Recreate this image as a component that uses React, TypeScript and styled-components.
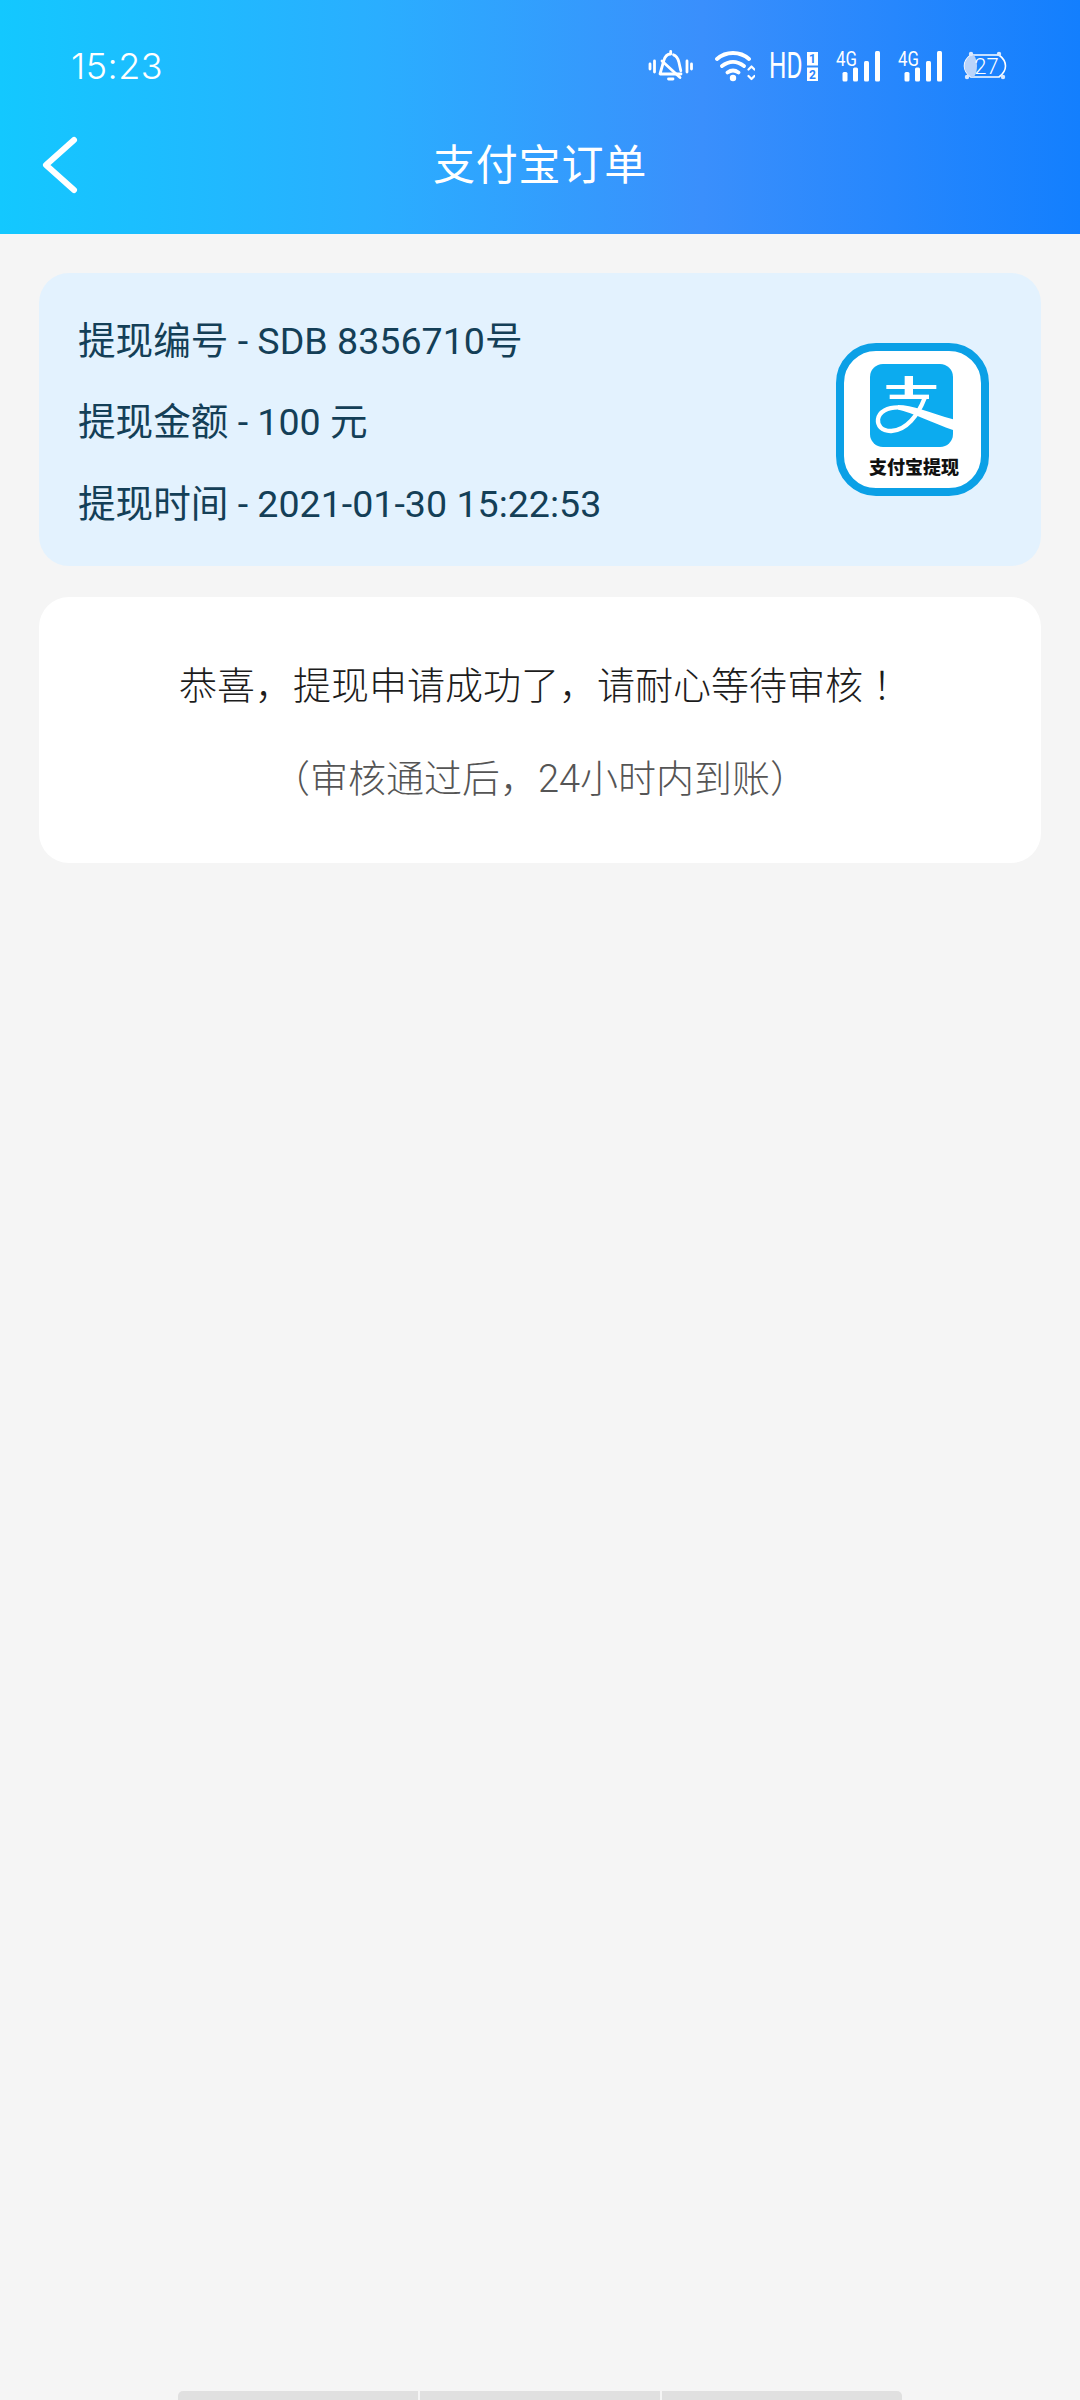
import styled, { createGlobalStyle } from 'styled-components'

const GlobalStyle = createGlobalStyle`
  html, body {
    margin: 0;
    padding: 0;
    background: #f5f5f5;
  }
  body {
    font-family: "Roboto", "Noto Sans CJK SC", sans-serif;
  }
`

const Page = styled.div`
  position: relative;
  width: 1080px;
  height: 2400px;
  background: #f5f5f5;
  overflow: hidden;
`

const Header = styled.header`
  height: 234px;
  box-sizing: border-box;
  padding-top: 42px;
  background: linear-gradient(90deg, #13c8ff 0%, #2aaeff 35%, #3a8ffc 65%, #137ffe 100%);
  color: #fff;
`

const StatusBar = styled.div`
  height: 48px;
  display: flex;
  align-items: center;
  justify-content: space-between;
  padding: 0 73px 0 71px;
`

const Clock = styled.span`
  font-family: "Inter", "Roboto", sans-serif;
  font-size: 36px;
  font-weight: 300;
  letter-spacing: 0.5px;
`

const StatusIcons = styled.div`
  display: flex;
  align-items: center;
`

const StatusIcon = styled.span<{ $gap?: number }>`
  display: flex;
  margin-left: ${(p) => p.$gap ?? 0}px;
`

const NavBar = styled.div`
  position: relative;
  height: 84px;
  margin-top: 34px;
  display: flex;
  align-items: center;
  justify-content: center;
`

const BackButton = styled.button`
  position: absolute;
  left: 40px;
  top: 10px;
  padding: 0;
  width: 40px;
  height: 62px;
  border: 0;
  background: none;
`

const Title = styled.h1`
  margin: 0;
  font-size: 42px;
  font-weight: 400;
  line-height: 84px;
  letter-spacing: 0.8px;
`

const Content = styled.main`
  padding: 39px 39px 0;
  display: flex;
  flex-direction: column;
  gap: 31px;
`

const OrderCard = styled.section`
  height: 293px;
  box-sizing: border-box;
  padding: 0 52px 0 39px;
  background: #e3f2fe;
  border-radius: 30px;
  display: flex;
  align-items: center;
  justify-content: space-between;
`

const OrderInfo = styled.div`
  display: flex;
  flex-direction: column;
  gap: 31.5px;
  padding-top: 5px;
`

const OrderRow = styled.div`
  font-size: 37.6px;
  line-height: 50px;
  font-weight: 400;
  color: #143f57;
`

const NoticeCard = styled.section`
  height: 266px;
  box-sizing: border-box;
  padding-top: 61px;
  background: #fff;
  border-radius: 30px;
  text-align: center;
`

const NoticeLine = styled.p<{ $muted?: boolean }>`
  margin: ${(p) => (p.$muted ? '43px' : '0')} 0 0;
  font-size: 38px;
  line-height: 50px;
  font-weight: 300;
  color: ${(p) => (p.$muted ? '#555' : '#1c1c1c')};
`

const CenteredMark = styled.span`
  font-family: "Noto Sans CJK TC", sans-serif;
`

const HomeBar = styled.div`
  position: absolute;
  left: 178px;
  bottom: 0;
  width: 724px;
  height: 9px;
  display: flex;
  gap: 2px;
`

const HomeSegment = styled.span`
  flex: 1;
  background: #e0e0e0;

  &:first-child {
    border-top-left-radius: 5px;
  }
  &:last-child {
    border-top-right-radius: 5px;
  }
`

const IconText = styled.text`
  font-family: "Roboto", sans-serif;
  fill: #fff;
`

function MutedBell() {
  return (
    <svg width="46" height="32" viewBox="0 0 46 32" fill="none" stroke="#fff" strokeWidth="2.800" strokeLinecap="round" strokeLinejoin="round">
      <path d="M2 14v5M6.500 11v11M39 11v11M43.500 14v5" />
      <path d="M22.700 1.500v2M22.700 4c-4 0-6 3-7 7L12 24h21" />
      <path d="M25.500 4.800c3 1 4.500 4 5.300 7l2 9" />
      <path d="M14 11l18 16.500" />
      <path d="M20.500 29h4.500" />
    </svg>
  )
}

function WifiIcon() {
  return (
    <svg width="40" height="32" viewBox="0 0 40 32" fill="none">
      <path d="M2 9C11 1 25 1 34 9M7 16c7-5.500 15-5.500 22 0M12.500 22.500c3.500-2.500 7.500-2.500 11 0" stroke="#fff" strokeWidth="3.800" strokeLinecap="round" />
      <circle cx="18" cy="28" r="3.200" fill="#fff" />
      <path d="M33.500 19.500l3-3 3 3M33.500 26l3 3 3-3" stroke="#fff" strokeWidth="2.200" strokeLinecap="round" strokeLinejoin="round" />
    </svg>
  )
}

function HdIcon() {
  return (
    <svg width="49" height="44" viewBox="0 -6 49 44">
      <IconText transform="translate(0 28) scale(0.68 1)" fontSize="36" fontWeight="400">HD</IconText>
      <rect x="38" y="2" width="11" height="13.500" fill="#fff" />
      <rect x="38" y="17.500" width="11" height="13.500" fill="#fff" />
      <text x="43.500" y="13" fontSize="12" fontWeight="700" textAnchor="middle" fontFamily="Roboto, sans-serif" fill="#2a85fd">1</text>
      <text x="43.500" y="28.500" fontSize="12" fontWeight="700" textAnchor="middle" fontFamily="Roboto, sans-serif" fill="#2a85fd">2</text>
    </svg>
  )
}

function SignalIcon() {
  return (
    <svg width="44" height="40" viewBox="0 -4 44 40">
      <IconText transform="translate(0 16) scale(0.84 1)" fontSize="20">4G</IconText>
      <rect x="6.500" y="22" width="5" height="9.500" rx="1.500" fill="#fff" />
      <rect x="17" y="17.500" width="5" height="14" rx="1.500" fill="#fff" />
      <rect x="28" y="11" width="5" height="20.500" rx="1.500" fill="#fff" />
      <rect x="39" y="1" width="5" height="30.500" rx="1.500" fill="#fff" />
    </svg>
  )
}

function BatteryIcon() {
  return (
    <svg width="44" height="32" viewBox="0 0 44 32">
      <path d="M8 5C4 8 1.500 11.500 1.500 16S4 24 8 27h28c4-3 6.500-6.500 6.500-11S40 8 36 5z" fill="none" stroke="#fff" strokeWidth="1.600" />
      <path d="M8 5h3c2 3 3 7 3 11s-1 8-3 11H8c-4-3-6.500-6.500-6.500-11S4 8 8 5z" fill="#b9d3fa" />
      <circle cx="8" cy="4" r="2.200" fill="#dbe9fe" />
      <circle cx="36" cy="4" r="2.200" fill="#dbe9fe" />
      <circle cx="4" cy="27" r="2.200" fill="#dbe9fe" />
      <circle cx="40" cy="27" r="2.200" fill="#dbe9fe" />
      <IconText x="23.500" y="24" fontSize="22" fontWeight="300" textAnchor="middle">27</IconText>
    </svg>
  )
}

function AlipayLogo() {
  return (
    <svg width="153" height="153" viewBox="0 0 153 153">
      <rect x="4" y="4" width="145" height="145" rx="36" fill="#fff" stroke="#0ba0e6" strokeWidth="8" />
      <rect x="34" y="21" width="83" height="83" rx="13" fill="#0cabef" />
      <g transform="translate(32 19) scale(0.3333)" fill="#fff">
        <rect x="55" y="69" width="150" height="12" />
        <rect x="110" y="42" width="25" height="60" />
        <rect x="65" y="98" width="118" height="13" />
        <path d="M170 108C150 160 115 205 70 207C40 208 28 190 30 172C33 148 60 136 90 136" fill="none" stroke="#fff" strokeWidth="13" />
        <path d="M90 129C130 129 190 153 255 172V204C200 185 130 150 90 143Z" />
      </g>
      <text x="78" y="131" fontSize="18" fontWeight="900" textAnchor="middle" fontFamily="Noto Sans CJK SC, sans-serif" fill="#111">支付宝提现</text>
    </svg>
  )
}

function App() {
  return (
    <Page>
      <GlobalStyle />
      <Header>
        <StatusBar>
          <Clock>15:23</Clock>
          <StatusIcons>
            <StatusIcon><MutedBell /></StatusIcon>
            <StatusIcon $gap={21}><WifiIcon /></StatusIcon>
            <StatusIcon $gap={14}><HdIcon /></StatusIcon>
            <StatusIcon $gap={18}><SignalIcon /></StatusIcon>
            <StatusIcon $gap={18}><SignalIcon /></StatusIcon>
            <StatusIcon $gap={21}><BatteryIcon /></StatusIcon>
          </StatusIcons>
        </StatusBar>
        <NavBar>
          <BackButton aria-label="back">
            <svg width="40" height="62" viewBox="0 0 40 62" fill="none">
              <path d="M34 6L6 31L34 56" stroke="#fff" strokeWidth="6" strokeLinecap="round" strokeLinejoin="round" />
            </svg>
          </BackButton>
          <Title>支付宝订单</Title>
        </NavBar>
      </Header>
      <Content>
        <OrderCard>
          <OrderInfo>
            <OrderRow>提现编号 - SDB 8356710号</OrderRow>
            <OrderRow>提现金额 - 100 元</OrderRow>
            <OrderRow>提现时间 - 2021-01-30 15:22:53</OrderRow>
          </OrderInfo>
          <AlipayLogo />
        </OrderCard>
        <NoticeCard>
          <NoticeLine>恭喜，提现申请成功了，请耐心等待审核<CenteredMark>！</CenteredMark></NoticeLine>
          <NoticeLine $muted>（审核通过后，24小时内到账）</NoticeLine>
        </NoticeCard>
      </Content>
      <HomeBar>
        <HomeSegment />
        <HomeSegment />
        <HomeSegment />
      </HomeBar>
    </Page>
  )
}

export default App
